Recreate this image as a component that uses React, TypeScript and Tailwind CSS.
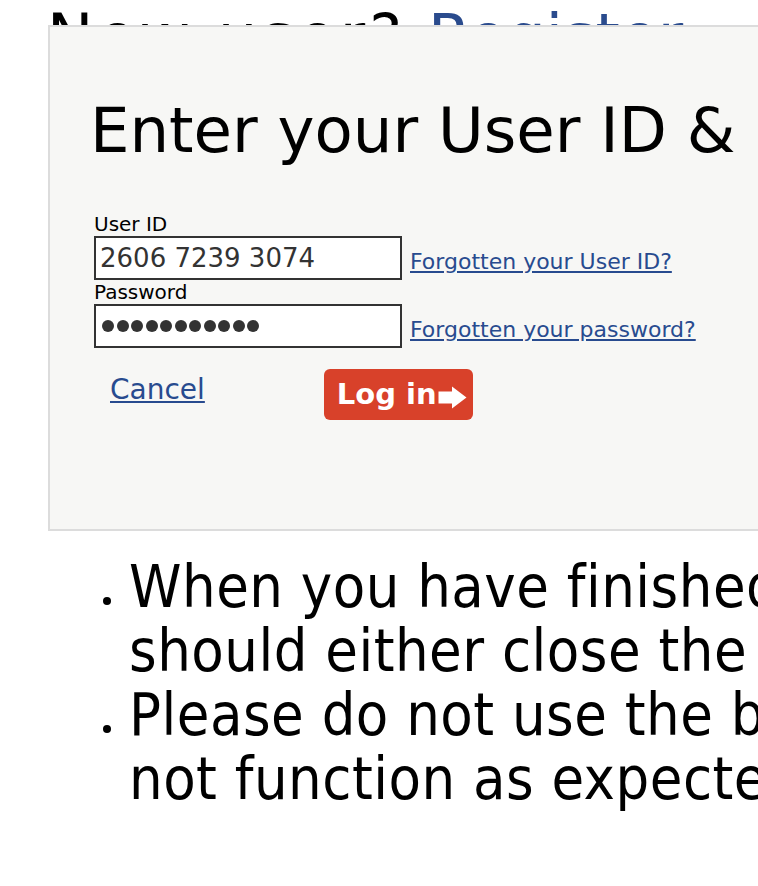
import React from "react";

function Dots({ n }: { n: number }) {
  return (
    <div className="flex items-center gap-[2.5px]">
      {Array.from({ length: n }).map((_, i) => (
        <span key={i} className="block w-[12px] h-[12px] rounded-full bg-[#333]" />
      ))}
    </div>
  );
}

export default function App() {
  return (
    <div className="w-[758px] h-[886px] overflow-hidden bg-white text-black [font-family:'DejaVu_Sans',Verdana,sans-serif]">
      <div className="w-[1200px]">
        <div className="h-[25px] pl-[47px] pt-[6px] text-[62px] leading-none whitespace-nowrap">
          <span className="tracking-[4px]">New user?</span>
          <span className="ml-[22px] text-[#2a4b8d]">Register</span>
        </div>
        <div className="relative w-[1000px] h-[506px] ml-[48px] bg-[#f7f7f5] border-2 border-[#dcdcdc] pl-[40px] pt-[73px]">
          <h1 className="text-[62.5px] leading-[62px] font-normal whitespace-nowrap">Enter your User ID &amp; Password</h1>
          <div className="mt-[50px] pl-[4px]">
            <div className="text-[20px] leading-[24px]">User ID</div>
            <div className="flex items-end gap-[8px]">
              <div className="w-[308px] h-[44px] border-2 border-[#333] bg-white flex items-center pl-[4px] text-[26px] text-[#333]">
                2606 7239 3074
              </div>
              <a className="mb-[6px] text-[22px] leading-[24px] text-[#284b8f] underline whitespace-nowrap">Forgotten your User ID?</a>
            </div>
            <div className="text-[20px] leading-[24px]">Password</div>
            <div className="flex items-end gap-[8px]">
              <div className="w-[308px] h-[44px] border-2 border-[#333] bg-white flex items-center pl-[6px]">
                <Dots n={11} />
              </div>
              <a className="mb-[6px] text-[22px] leading-[24px] text-[#284b8f] underline whitespace-nowrap">Forgotten your password?</a>
            </div>
            <div className="mt-[21px] flex items-start">
              <a className="ml-[16px] mt-[5px] text-[28px] leading-[32px] text-[#284b8f] underline">Cancel</a>
              <button className="ml-[119px] w-[149px] h-[51px] pl-[13px] rounded-[6px] bg-[#d8412a] text-white font-bold text-[29px] flex items-center">
                <span>Log in</span>
                <svg className="ml-[1px] mt-[5px]" width="29" height="23" viewBox="0 0 29 23">
                  <path d="M0.5 5.5 H14 V0.5 L28.5 11.5 L14 22.5 V17.5 H0.5 Z" fill="white" />
                </svg>
              </button>
            </div>
          </div>
        </div>
        <ul className="mt-[24px] pl-[129px] text-[59px] leading-[64px] tracking-[0.5px] whitespace-nowrap [font-family:'DejaVu_Sans_Condensed','DejaVu_Sans',sans-serif] font-stretch-condensed">
          <li className="relative">
            <span className="absolute -left-[26px] top-[42px] w-[8px] h-[8px] rounded-full bg-black" />
            When you have finished using the service you
            <br />
            should either close the browser or log out
          </li>
          <li className="relative">
            <span className="absolute -left-[26px] top-[42px] w-[8px] h-[8px] rounded-full bg-black" />
            Please do not use the back button as pages may
            <br />
            not function as expected
          </li>
        </ul>
      </div>
    </div>
  );
}
